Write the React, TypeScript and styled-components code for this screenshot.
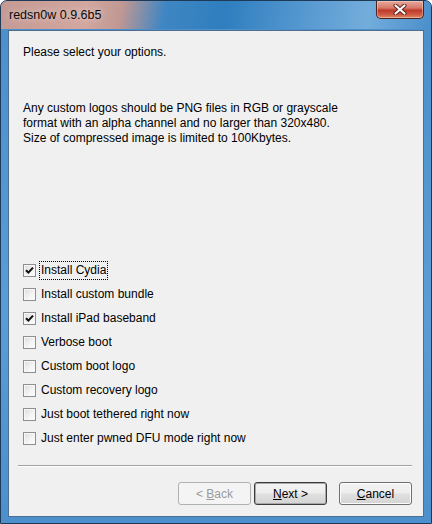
import styled, { createGlobalStyle } from 'styled-components';

const GlobalStyle = createGlobalStyle`
    html, body {
        margin: 0;
        padding: 0;
        background: #ffffff;
        overflow: hidden;
    }
`;

type Option = { label: string; checked: boolean; focused?: boolean };

const options: Option[] = [
    { label: 'Install Cydia', checked: true, focused: true },
    { label: 'Install custom bundle', checked: false },
    { label: 'Install iPad baseband', checked: true },
    { label: 'Verbose boot', checked: false },
    { label: 'Custom boot logo', checked: false },
    { label: 'Custom recovery logo', checked: false },
    { label: 'Just boot tethered right now', checked: false },
    { label: 'Just enter pwned DFU mode right now', checked: false },
];

function CheckMark() {
    return (
        <svg width="9" height="9" viewBox="0 0 9 9">
            <path d="M1 4.2 L3.4 6.6 L8 1.6" fill="none" stroke="#111111" strokeWidth="2.1" />
        </svg>
    );
}

function CloseGlyph() {
    return (
        <svg width="14" height="11" viewBox="0 0 14 11">
            <path d="M2.5 1.5 L11.5 9.5 M11.5 1.5 L2.5 9.5" stroke="#5a1f1a" strokeWidth="4" strokeLinecap="round" />
            <path d="M2.5 1.5 L11.5 9.5 M11.5 1.5 L2.5 9.5" stroke="#ffffff" strokeWidth="2.2" strokeLinecap="round" />
        </svg>
    );
}

export default function App() {
    return (
        <>
            <GlobalStyle />
            <Window>
                <TitleBar>
                    <Title>redsn0w 0.9.6b5</Title>
                    <CloseButton>
                        <CloseGlyph />
                    </CloseButton>
                </TitleBar>
                <Client>
                    <Heading>Please select your options.</Heading>
                    <Info>
                        Any custom logos should be PNG files in RGB or grayscale
                        <br />
                        format with an alpha channel and no larger than 320x480.
                        <br />
                        Size of compressed image is limited to 100Kbytes.
                    </Info>
                    <OptionList>
                        {options.map((o) => (
                            <OptionRow key={o.label}>
                                <Box>{o.checked && <CheckMark />}</Box>
                                <Label $focused={o.focused}>{o.label}</Label>
                            </OptionRow>
                        ))}
                    </OptionList>
                    <Separator />
                    <ButtonRow>
                        <Button disabled>
                            &lt; <u>B</u>ack
                        </Button>
                        <Button $default>
                            <u>N</u>ext &gt;
                        </Button>
                        <Button $gap>
                            <u>C</u>ancel
                        </Button>
                    </ButtonRow>
                </Client>
            </Window>
        </>
    );
}

const Window = styled.div`
    box-sizing: border-box;
    width: 432px;
    height: 524px;
    display: flex;
    flex-direction: column;
    border: 1px solid #1f3a56;
    border-radius: 7px 7px 0 0;
    overflow: hidden;
    background: linear-gradient(to bottom, #4a8fcb 0%, #5a9dd6 60%, #4b90cc 100%);
`;

const TitleBar = styled.div`
    height: 28px;
    display: flex;
    align-items: flex-start;
    background: linear-gradient(
        100deg,
        #c49a94 0%,
        #d2a79f 20%,
        #c19893 28%,
        #3f86c3 38%,
        #2f7ebf 52%,
        #5a9bd2 72%,
        #73addb 85%,
        #4a8fcb 100%
    );
`;

const Title = styled.div`
    padding: 7px 0 0 8px;
    font-family: 'Liberation Sans', Arial, sans-serif;
    font-size: 12.5px;
    color: #0a0a0a;
    text-shadow: 0 0 6px rgba(255, 255, 255, 0.7);
`;

const CloseButton = styled.div`
    margin-left: auto;
    margin-right: 7px;
    width: 48px;
    height: 18px;
    display: flex;
    align-items: center;
    justify-content: center;
    box-sizing: border-box;
    border: 1px solid #4a2420;
    border-top: none;
    border-radius: 0 0 5px 5px;
    background: linear-gradient(to bottom, #e6a99d 0%, #d77a6a 40%, #c0392b 55%, #cf5a43 80%, #e08a66 100%);
    box-shadow: inset 0 0 0 1px rgba(255, 220, 210, 0.45);
`;

const Client = styled.div`
    flex: 1;
    margin: 1px 7px 6px 7px;
    display: flex;
    flex-direction: column;
    background: #f0f0f0;
    border: 1px solid #4e6d8f;
    font-family: 'Liberation Sans', Arial, sans-serif;
    font-size: 12px;
    color: #000000;
`;

const Heading = styled.div`
    margin: 14px 0 0 14px;
    line-height: 15px;
`;

const Info = styled.div`
    margin: 41px 0 0 14px;
    line-height: 15px;
`;

const OptionList = styled.div`
    margin: 112px 0 0 14px;
    display: flex;
    flex-direction: column;
`;

const OptionRow = styled.div`
    height: 24px;
    display: flex;
    align-items: center;
`;

const Box = styled.span`
    box-sizing: border-box;
    width: 13px;
    height: 13px;
    display: flex;
    align-items: center;
    justify-content: center;
    border: 1px solid #8e8f8f;
    background: linear-gradient(135deg, #dcdcdc 0%, #f4f4f4 60%, #ffffff 100%);
    box-shadow: inset 0 0 0 1px #f8f8f8;
`;

const Label = styled.span<{ $focused?: boolean }>`
    margin-left: 3px;
    padding: 1px 1px 2px 1px;
    line-height: 14px;
    border: 1px dotted ${(p) => (p.$focused ? '#000000' : 'transparent')};
`;

const Separator = styled.div`
    margin: 15px 11px 0 9px;
    height: 1px;
    background: #a0a0a0;
    box-shadow: 0 1px 0 #ffffff;
`;

const ButtonRow = styled.div`
    margin: 16px 11px 0 0;
    display: flex;
    justify-content: flex-end;
    gap: 3px;
`;

const Button = styled.button<{ $default?: boolean; $gap?: boolean }>`
    box-sizing: border-box;
    width: 73px;
    height: 23px;
    margin-left: ${(p) => (p.$gap ? '9px' : '0')};
    padding: 0;
    font-family: 'Liberation Sans', Arial, sans-serif;
    font-size: 12px;
    color: #000000;
    border: 1px solid ${(p) => (p.$default ? '#3c3c3c' : '#707070')};
    border-radius: 3px;
    background: linear-gradient(to bottom, #f4f4f4 0%, #ededed 48%, #e0e0e0 52%, #d4d4d4 100%);
    box-shadow: inset 0 0 0 1px ${(p) => (p.$default ? '#a8a8a8' : '#fcfcfc')};

    &:disabled {
        color: #9a9a9a;
        border-color: #adb2b5;
        background: #f4f4f4;
        box-shadow: none;
    }
`;
